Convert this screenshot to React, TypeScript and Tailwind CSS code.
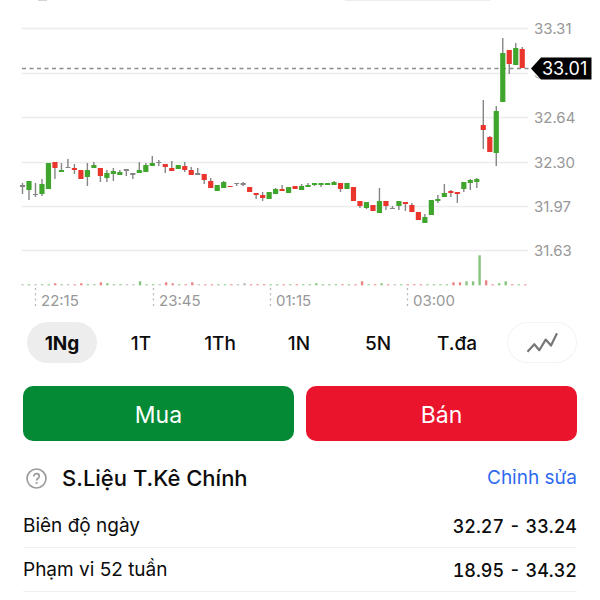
import { useState } from 'react';
import clsx from 'clsx';

type Tone = 'up' | 'down' | 'flat';

// [high, bodyTop, bodyBottom, low, tone] in chart units, top of the chart is 0
type Candle = [number, number, number, number, Tone];

const CANDLES: Candle[] = [
    [183, 185, 187, 194, 'flat'],
    [181, 181, 190, 200, 'up'],
    [183, 194, 195, 197, 'flat'],
    [179, 184, 194, 196, 'up'],
    [163, 163, 189, 189, 'up'],
    [162, 162, 168, 179, 'down'],
    [163, 170, 172, 172, 'up'],
    [159, 167, 168, 168, 'flat'],
    [164, 168, 170, 174, 'down'],
    [170, 170, 179, 179, 'down'],
    [163, 170, 177, 186, 'up'],
    [162, 165, 168, 168, 'up'],
    [168, 168, 176, 182, 'down'],
    [170, 173, 178, 182, 'up'],
    [168, 171, 174, 181, 'up'],
    [170, 172, 175, 175, 'up'],
    [169, 169, 171, 176, 'flat'],
    [173, 173, 175, 179, 'flat'],
    [162, 170, 173, 173, 'up'],
    [163, 165, 172, 172, 'up'],
    [156, 163, 166, 166, 'up'],
    [160, 162, 163, 166, 'flat'],
    [164, 164, 167, 173, 'down'],
    [161, 168, 171, 171, 'down'],
    [165, 165, 169, 169, 'up'],
    [162, 166, 170, 172, 'down'],
    [167, 170, 175, 175, 'down'],
    [168, 173, 175, 175, 'flat'],
    [174, 174, 180, 184, 'down'],
    [178, 181, 188, 188, 'down'],
    [185, 185, 191, 191, 'up'],
    [181, 182, 188, 188, 'up'],
    [186, 186, 187, 187, 'down'],
    [183, 183, 184, 186, 'flat'],
    [182, 183, 185, 186, 'flat'],
    [187, 187, 192, 192, 'down'],
    [193, 193, 195, 199, 'down'],
    [192, 195, 198, 201, 'down'],
    [192, 192, 199, 199, 'up'],
    [188, 189, 194, 194, 'up'],
    [185, 189, 191, 191, 'down'],
    [187, 187, 193, 193, 'up'],
    [186, 186, 189, 189, 'down'],
    [184, 186, 190, 190, 'up'],
    [183, 185, 187, 187, 'up'],
    [183, 183, 185, 186, 'up'],
    [183, 183, 185, 187, 'up'],
    [183, 183, 185, 185, 'up'],
    [181, 182, 185, 185, 'up'],
    [183, 183, 189, 192, 'down'],
    [183, 183, 189, 189, 'up'],
    [187, 187, 201, 201, 'down'],
    [201, 201, 206, 208, 'down'],
    [202, 202, 208, 209, 'up'],
    [205, 205, 211, 211, 'down'],
    [188, 201, 213, 213, 'up'],
    [201, 201, 206, 210, 'down'],
    [206, 208, 209, 209, 'flat'],
    [201, 201, 206, 210, 'up'],
    [202, 202, 204, 211, 'down'],
    [203, 205, 212, 212, 'down'],
    [212, 212, 220, 220, 'down'],
    [214, 217, 223, 223, 'up'],
    [200, 200, 215, 215, 'up'],
    [195, 199, 201, 203, 'up'],
    [184, 193, 197, 197, 'up'],
    [190, 191, 193, 197, 'down'],
    [192, 192, 194, 203, 'down'],
    [182, 182, 189, 192, 'up'],
    [179, 180, 183, 190, 'up'],
    [178, 179, 182, 188, 'up'],
    [100, 125, 130, 149, 'down'],
    [136, 137, 152, 152, 'down'],
    [106, 111, 153, 166, 'up'],
    [38, 53, 102, 102, 'up'],
    [50, 50, 64, 74, 'down'],
    [43, 48, 65, 65, 'up'],
    [47, 49, 68, 68, 'down'],
];

// Bars that rise above the one unit minimum, by candle index
const VOLUMES: Record<number, number> = {
    5: 2, 9: 2, 12: 3, 13: 2, 18: 4, 22: 3, 23: 2, 26: 3, 34: 2, 45: 2, 52: 4, 55: 2,
    66: 3, 67: 3, 68: 4, 69: 4, 70: 30, 71: 5, 73: 2, 74: 4,
};

const GRID = [28, 73, 117, 162, 206, 250];

const PRICES = [
    { label: '33.31', y: 34 },
    { label: '32.64', y: 123 },
    { label: '32.30', y: 168 },
    { label: '31.97', y: 212 },
    { label: '31.63', y: 256 },
];

const TIMES = [
    { label: '22:15', x: 35 },
    { label: '23:45', x: 153 },
    { label: '01:15', x: 270 },
    { label: '03:00', x: 407 },
];

const BODY: Record<Tone, string> = { up: '#3fa52c', down: '#e9352c', flat: '#858585' };
const VOLUME: Record<Tone, string> = { up: '#86c67c', down: '#ea8585', flat: '#b5b5b5' };

const RANGES = ['1Ng', '1T', '1Th', '1N', '5N', 'T.đa'];

const STATS = [
    { label: 'Biên độ ngày', value: '32.27 - 33.24' },
    { label: 'Phạm vi 52 tuần', value: '18.95 - 34.32' },
];

const candleX = (index: number) => 22.5 + index * 6.49;
const volumeX = (index: number) => 22.5 + index * 6.53;

const PriceChart = () => (
    <svg viewBox="0 0 600 314" className="block w-full" role="img" aria-label="33.01">
        {/* Lower edges of the toolbar above */}
        <rect x="38" y="0" width="9" height="1" fill="#d4d4d4" />
        <rect x="345" y="0" width="145" height="1" fill="#ededed" />

        {GRID.map((y) => (
            <line key={y} x1="22" x2="528" y1={y + 0.5} y2={y + 0.5} stroke="#ececec" strokeWidth="1.5" />
        ))}
        {PRICES.map(({ label, y }) => (
            <text key={label} x="534" y={y} fontSize="15" fill="#989898">{label}</text>
        ))}

        <line x1="22" x2="529" y1="68.5" y2="68.5" stroke="#8c8c8c" strokeWidth="1.3" strokeDasharray="4 3.5" />

        {CANDLES.map(([high, top, bottom, low, tone], i) => (
            <g key={i}>
                <line x1={candleX(i)} x2={candleX(i)} y1={high} y2={low} stroke="#858585" strokeWidth="1.4" />
                <rect
                    x={candleX(i) - 2.6}
                    y={top}
                    width="5.2"
                    height={bottom - top}
                    rx="0.5"
                    fill={BODY[tone]}
                />
                <rect
                    x={volumeX(i) - 1.2}
                    y={285.3 - (VOLUMES[i] ?? 1)}
                    width="2.4"
                    height={VOLUMES[i] ?? 1}
                    fill={VOLUME[tone]}
                />
            </g>
        ))}

        {TIMES.map(({ label, x }) => (
            <g key={label}>
                <line x1={x + 0.5} x2={x + 0.5} y1="288" y2="309" stroke="#b8b8b8" strokeWidth="1.3" strokeDasharray="2 3.3" />
                <text x={x + 6} y="306" fontSize="15" fill="#989898">{label}</text>
            </g>
        ))}

        {/* Last price tag */}
        <path d="M535 75.5 Q537 78.5 540 78" fill="none" stroke="#b0b0b0" strokeWidth="1.2" />
        <path d="M531 68.5 L541 57.5 H591.5 V79.5 H541 Z" fill="#000" />
        <text x="542" y="75" fontSize="18" fill="#fff">33.01</text>
    </svg>
);

const App = () => {
    const [range, setRange] = useState('1Ng');

    return (
        <main className="bg-white font-['Inter','Liberation_Sans',sans-serif] text-[#0c0c0c]">
            <PriceChart />

            {/* Range selector */}
            <div className="mt-2 flex gap-[9px] pl-[27px] pr-[23px]">
                {RANGES.map((item) => (
                    <button
                        key={item}
                        type="button"
                        aria-pressed={item === range}
                        onClick={() => setRange(item)}
                        className={clsx(
                            'h-[41px] flex-1 rounded-full pt-1 text-[19px]',
                            item === range ? 'bg-[#ededed] font-bold' : 'font-medium',
                        )}
                    >
                        {item}
                    </button>
                ))}
                <button
                    type="button"
                    aria-label="Kiểu biểu đồ"
                    className="ml-1.5 flex h-[41px] flex-1 items-center justify-center rounded-full ring-1 ring-[#f3f3f3] ring-inset"
                >
                    <svg width="32" height="22" viewBox="0 0 32 22" fill="none" stroke="#777" strokeWidth="2.2">
                        <path d="M1.5 19.8 L8.3 12.2 L13.3 18.2 L19.7 7.6 L25 13.6 L31 1.2" strokeLinejoin="round" />
                    </svg>
                </button>
            </div>

            {/* Trade actions */}
            <div className="mt-[23px] flex gap-3 px-[23px]">
                <button type="button" className="h-[55px] flex-1 rounded-[10px] bg-[#048a35] pt-1 text-[23px] text-white">
                    Mua
                </button>
                <button type="button" className="h-[55px] flex-1 rounded-[10px] bg-[#eb142d] pt-1 text-[23px] text-white">
                    Bán
                </button>
            </div>

            {/* Key statistics */}
            <section className="px-[23px] pt-3">
                <header className="flex h-[51px] items-center">
                    <button type="button" aria-label="Trợ giúp" className="ml-[3px] mr-[15px]">
                        <svg width="21" height="21" viewBox="0 0 21 21" fill="none" stroke="#9c9c9c">
                            <circle cx="10.5" cy="10.5" r="9.5" strokeWidth="1.7" />
                            <path d="M7.8 8.4 C7.8 4.7 13.3 4.9 13.3 8.2 C13.3 10.2 10.6 10.3 10.6 12.6" strokeWidth="1.7" />
                            <circle cx="10.6" cy="15" r="1.1" fill="#9c9c9c" stroke="none" />
                        </svg>
                    </button>
                    <h2 className="text-[22px] font-medium">S.Liệu T.Kê Chính</h2>
                    <a href="#edit" className="ml-auto text-[19px] text-[#2f6bf0]">Chỉnh sửa</a>
                </header>
                <dl>
                    {STATS.map(({ label, value }) => (
                        <div key={label} className="flex h-11 items-center justify-between border-b border-[#f0f0f0] pt-0.5">
                            <dt className="text-[19px]">{label}</dt>
                            <dd className="text-lg font-medium tabular-nums">{value}</dd>
                        </div>
                    ))}
                </dl>
            </section>
        </main>
    );
};

export default App;
